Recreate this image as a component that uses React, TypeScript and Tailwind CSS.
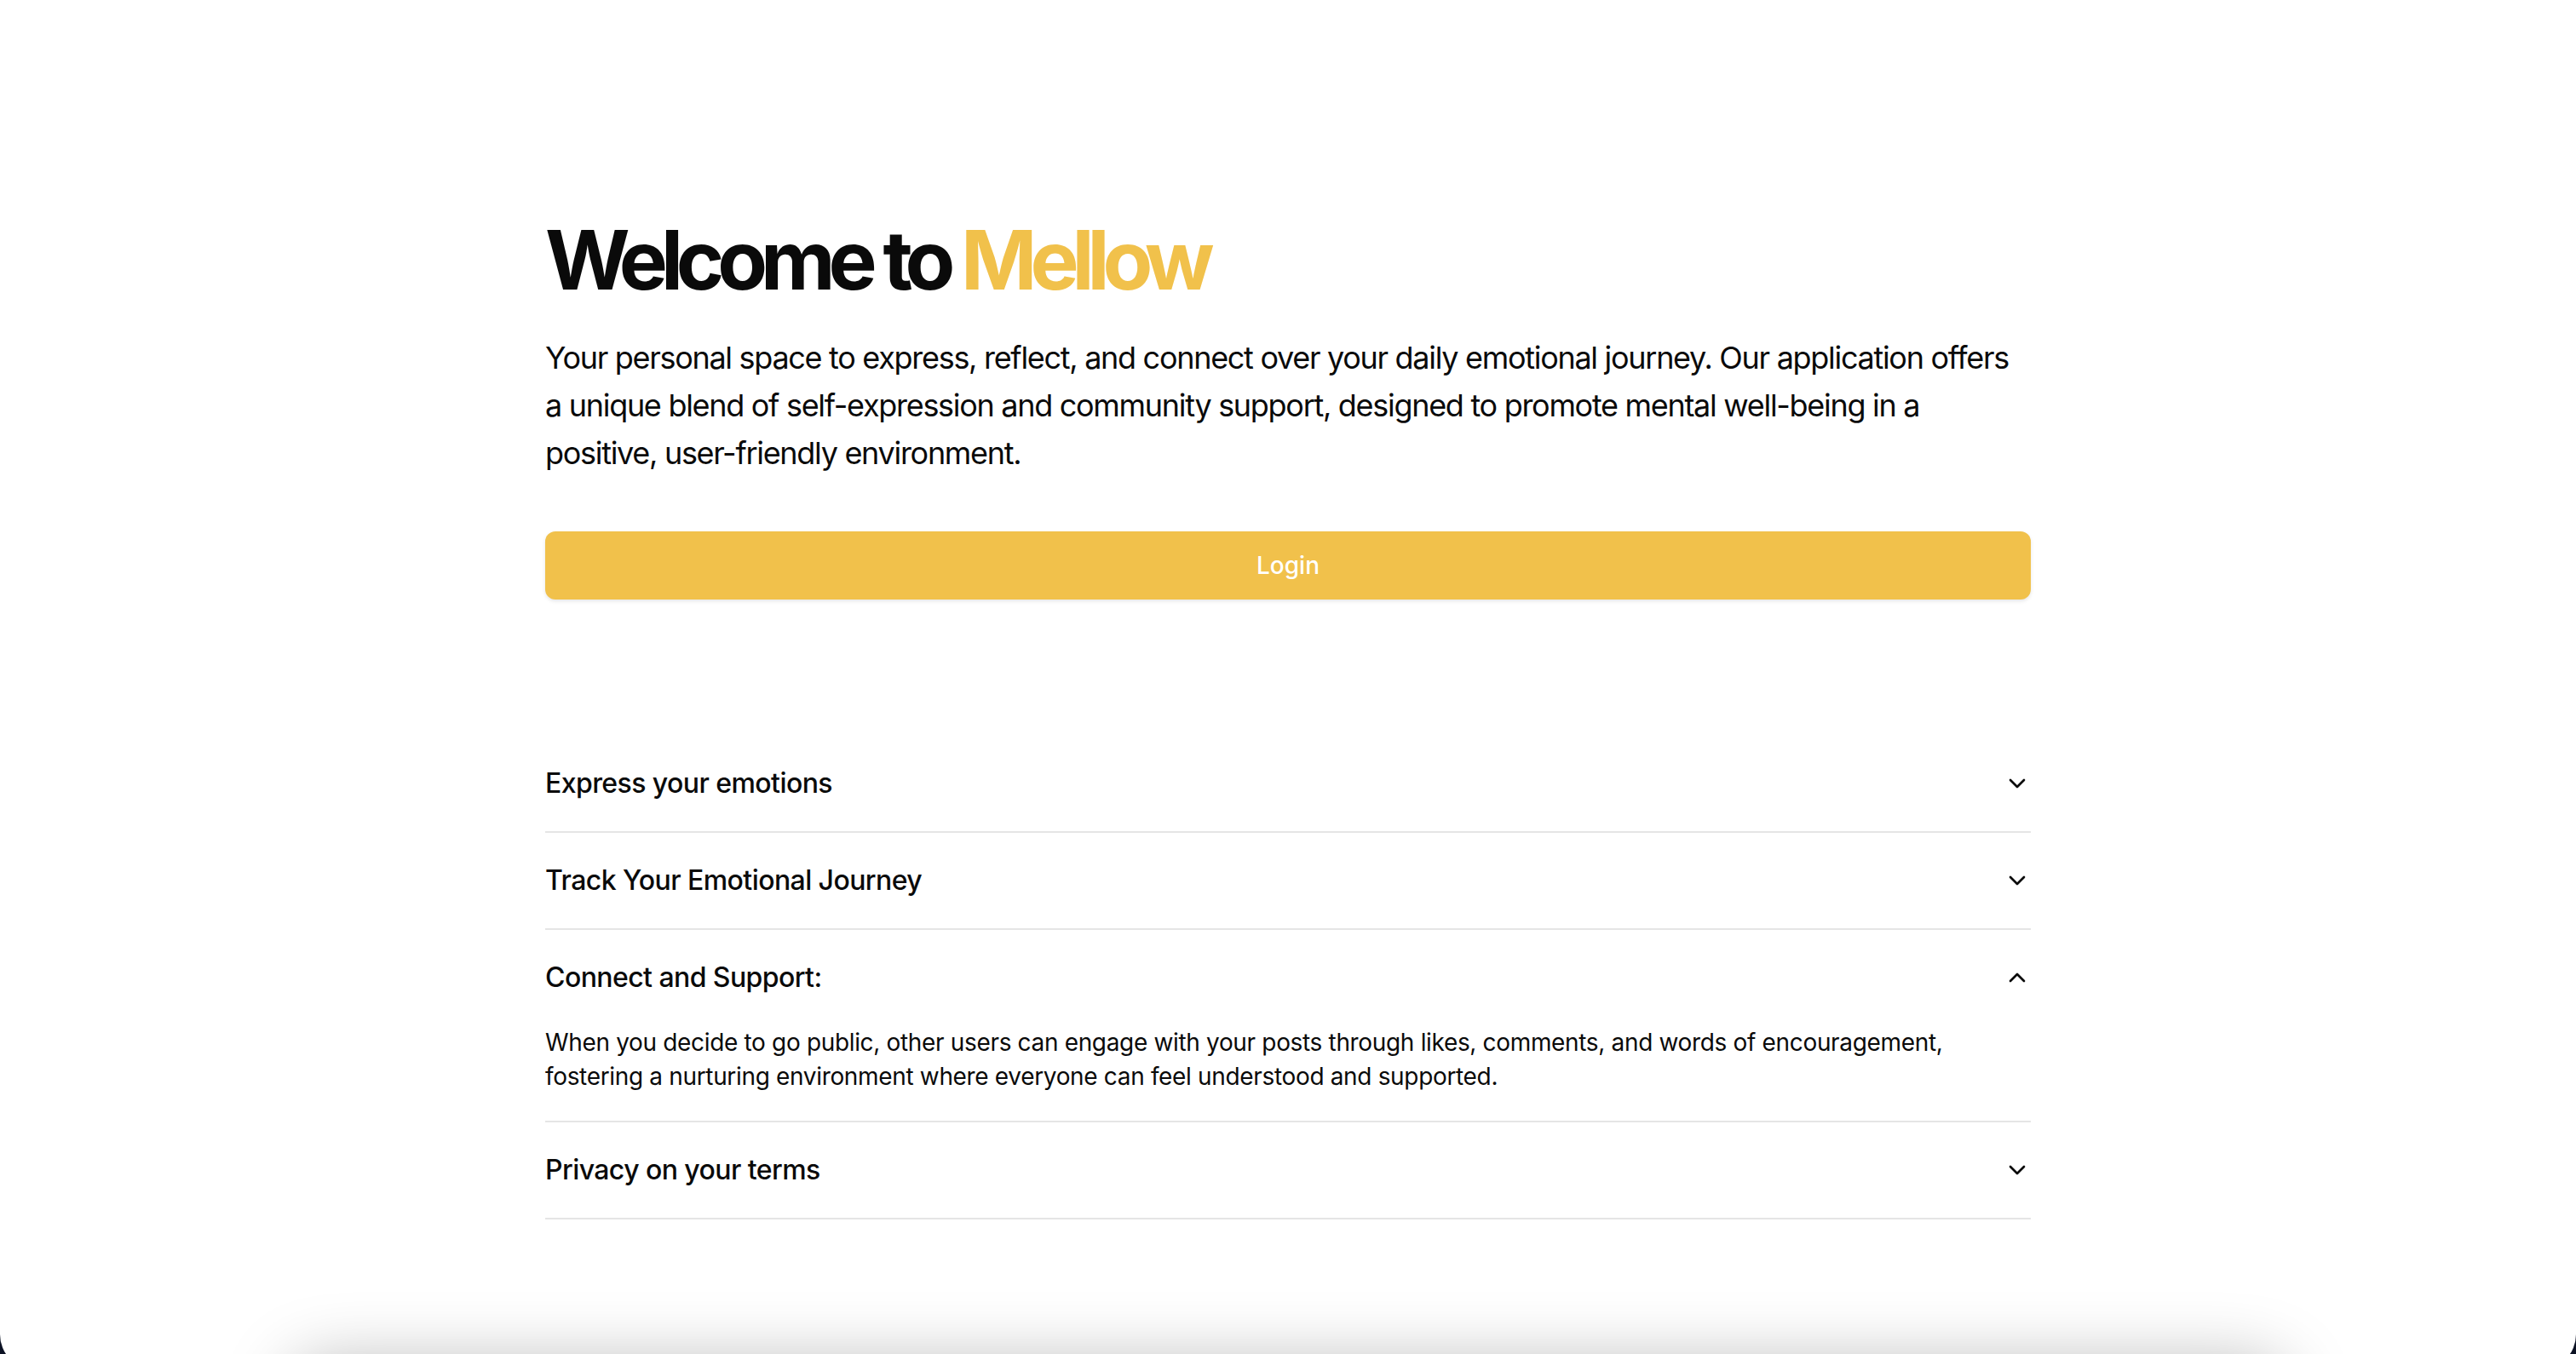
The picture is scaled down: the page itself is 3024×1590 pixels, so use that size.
import React from "react";
import { ChevronDown, ChevronUp } from "lucide-react";

const items = [
  { title: "Express your emotions", open: false, body: "" },
  { title: "Track Your Emotional Journey", open: false, body: "" },
  {
    title: "Connect and Support:",
    open: true,
    body: "When you decide to go public, other users can engage with your posts through likes, comments, and words of encouragement, fostering a nurturing environment where everyone can feel understood and supported.",
  },
  { title: "Privacy on your terms", open: false, body: "" },
];

export default function App() {
  return (
    <div className="h-[1590px] w-[3024px] overflow-hidden bg-[#0c1224]" style={{ fontFamily: "Inter, 'Noto Sans', sans-serif" }}>
      <div className="relative h-[1608px] w-full overflow-hidden rounded-b-[41px] bg-white text-[#0a0a0a]">
        <div className="mx-auto w-[1744px] pt-[257px]">
          <h1 className="text-[96px] font-bold leading-none tracking-[-0.084em] text-[#0a0a0a]">
            Welcome to <span className="text-[#f1c14b]">Mellow</span>
          </h1>
          <p className="mt-[39px] text-[36px] leading-[56px] tracking-[-0.036em] text-[#0a0a0a]">
            Your personal space to express, reflect, and connect over your daily emotional journey. Our application offers a unique blend of self-expression and community support, designed to promote mental well-being in a positive, user-friendly environment.
          </p>
          <button className="mt-[64px] flex h-[80px] w-full items-center justify-center rounded-[12px] bg-[#f1c14b] text-[28px] font-medium text-white shadow-[0_2px_4px_rgba(0,0,0,0.1)]">
            Login
          </button>

          <div className="mt-[160px]">
            {items.map((it) => (
              <div key={it.title} className="border-b-2 border-[#e5e5e5]">
                <div className="flex items-center justify-between py-[32px]">
                  <span className="text-[32px] font-medium leading-[48px] tracking-[-0.018em]">{it.title}</span>
                  {it.open ? (
                    <ChevronUp size={32} strokeWidth={2} className="text-[#0a0a0a]" />
                  ) : (
                    <ChevronDown size={32} strokeWidth={2} className="text-[#0a0a0a]" />
                  )}
                </div>
                {it.open && (
                  <div className="pb-[32px] text-[28px] leading-[40px] tracking-[-0.012em]">{it.body}</div>
                )}
              </div>
            ))}
          </div>
        </div>
        <div className="absolute left-[340px] right-[340px] top-[1600px] h-[200px] rounded-[40px] bg-white shadow-[0_0_80px_rgba(0,0,0,0.28)]" />
      </div>
    </div>
  );
}
